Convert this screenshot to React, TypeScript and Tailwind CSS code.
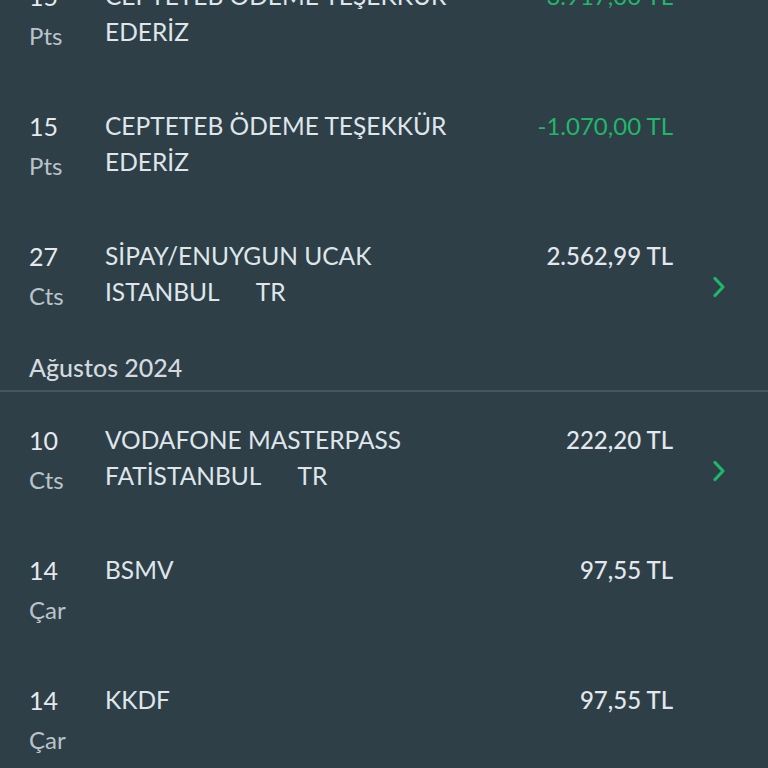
import React from "react"

interface Txn {
  day: string
  weekday: string
  lines: string[]
  amount: string
  credit?: boolean
  detail?: boolean
}

const july: Txn[] = [
  { day: "15", weekday: "Pts", lines: ["CEPTETEB ÖDEME TEŞEKKÜR", "EDERİZ"], amount: "-3.917,00 TL", credit: true },
  { day: "15", weekday: "Pts", lines: ["CEPTETEB ÖDEME TEŞEKKÜR", "EDERİZ"], amount: "-1.070,00 TL", credit: true },
  { day: "27", weekday: "Cts", lines: ["SİPAY/ENUYGUN UCAK", "ISTANBUL\u00a0\u00a0\u00a0\u00a0\u00a0\u00a0TR"], amount: "2.562,99 TL", detail: true },
]

const august: Txn[] = [
  { day: "10", weekday: "Cts", lines: ["VODAFONE MASTERPASS", "FATİSTANBUL\u00a0\u00a0\u00a0\u00a0\u00a0\u00a0TR"], amount: "222,20 TL", detail: true },
  { day: "14", weekday: "Çar", lines: ["BSMV"], amount: "97,55 TL" },
  { day: "14", weekday: "Çar", lines: ["KKDF"], amount: "97,55 TL" },
]

function Chevron() {
  return (
    <svg width="16" height="24" viewBox="0 0 16 24" fill="none">
      <path d="M4 3.5l8 8.5-8 8.5" stroke="#1fb868" strokeWidth="3.2" strokeLinecap="round" strokeLinejoin="round" />
    </svg>
  )
}

function Row({ t }: { t: Txn }) {
  return (
    <div className="flex h-[130px] pl-[29px] pt-[20px]">
      <div className="w-[76px] shrink-0">
        <div className="h-[36px] leading-[36px] text-[25px] text-[#e4eaee]">{t.day}</div>
        <div className="h-[40px] leading-[44px] text-[24px] text-[#b9c4ca]">{t.weekday}</div>
      </div>
      <div className="flex-1 text-[24.5px] leading-[36px] text-[#dfe6ea]">
        {t.lines.map((l, i) => (
          <div key={i} className="whitespace-pre">{l}</div>
        ))}
      </div>
      <div
        className={`text-[24px] leading-[36px] text-right whitespace-nowrap ${
          t.credit ? "text-[#1fb868]" : "font-medium text-[#e2e8ec]"
        }`}
      >
        {t.amount}
      </div>
      <div className="w-[95px] shrink-0 pl-[38px] pt-[37px]">{t.detail && <Chevron />}</div>
    </div>
  )
}

export default function App() {
  return (
    <div
      className="h-[768px] w-[768px] overflow-hidden bg-[#2e3f48]"
      style={{ fontFamily: "Lato, 'Noto Sans', sans-serif" }}
    >
      <div className="mt-[-42px]">
        {july.map((t, i) => (
          <Row key={i} t={t} />
        ))}
        <div className="h-[42px] pl-[29px] pt-[5px] text-[25px] leading-[28px] font-medium text-[#d3dadf]">
          Ağustos 2024
        </div>
        <div className="h-[2px] bg-[#475761]" />
        <div className="h-[10px]" />
        {august.map((t, i) => (
          <Row key={i} t={t} />
        ))}
      </div>
    </div>
  )
}
